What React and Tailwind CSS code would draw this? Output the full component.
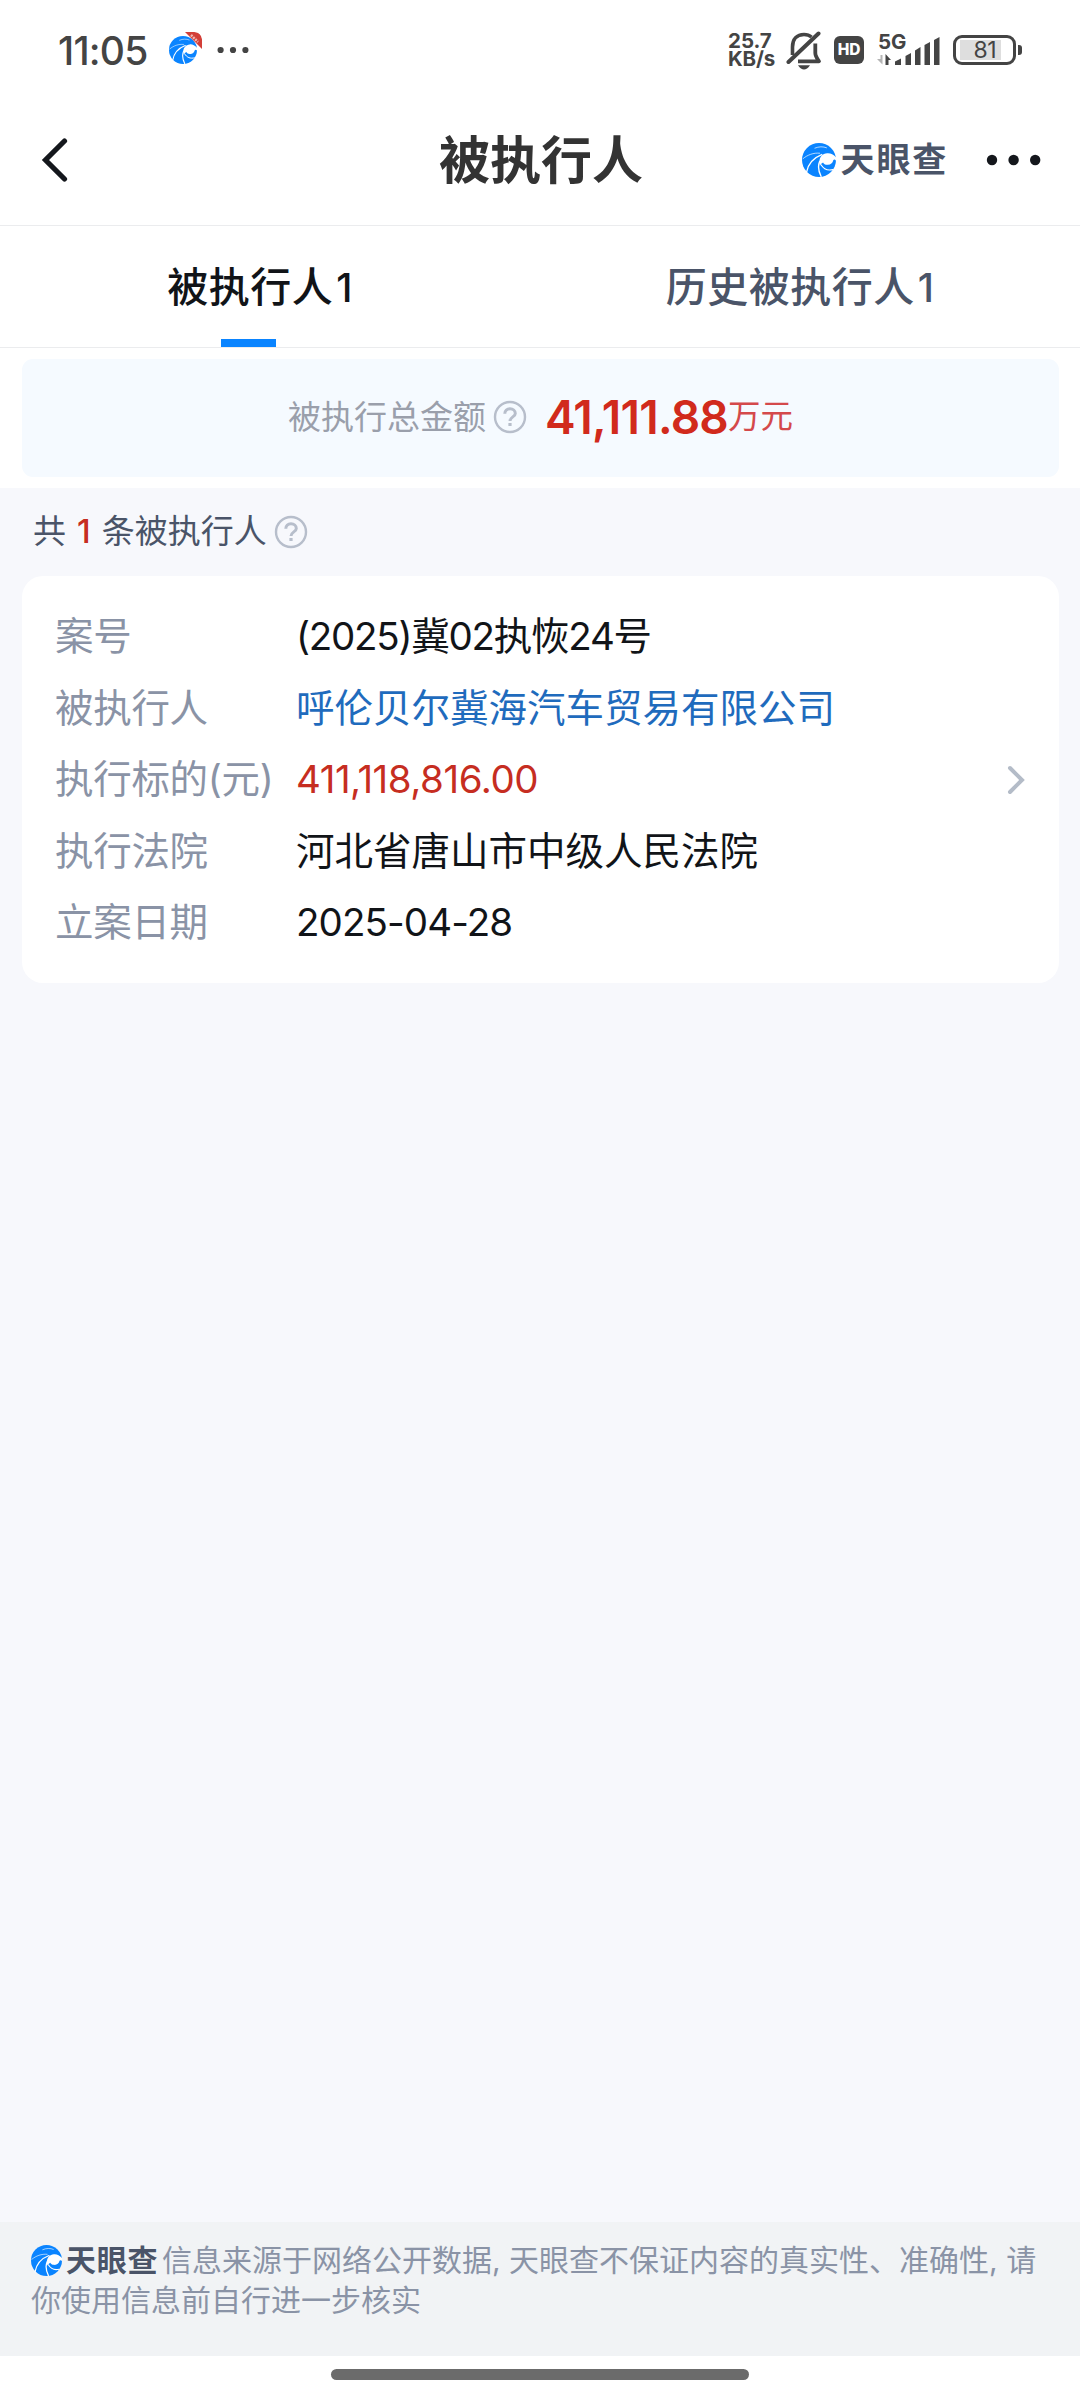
import { Fragment } from "react";

const rows = [
  { label: "案号", value: "(2025)冀02执恢24号", tone: "text-[#111418] tracking-[-1.25px]" },
  { label: "被执行人", value: "呼伦贝尔冀海汽车贸易有限公司", tone: "text-[#1f6bbd]" },
  { label: "执行标的(元)", value: "411,118,816.00", tone: "text-[#c62d21] tracking-[-0.45px]" },
  { label: "执行法院", value: "河北省唐山市中级人民法院", tone: "text-[#111418]" },
  { label: "立案日期", value: "2025-04-28", tone: "text-[#111418] tracking-[-0.9px]" },
];

const tabs = [
  { name: "被执行人", count: 1, active: true },
  { name: "历史被执行人", count: 1, active: false },
];

function Swirl({ className }) {
  return (
    <svg viewBox="0 0 100 100" className={className}>
      <circle cx="50" cy="50" r="50" fill="#0a84ff" />
      <g fill="none" stroke="#fff" strokeLinecap="round">
        <path d="M13 87C17 64 32 44 58 34" strokeWidth="4" />
        <path d="M3 46C16 35 34 28 52 30" strokeWidth="2" />
        <path d="M38 15C50 10 62 10 72 14" strokeWidth="2" />
        <path d="M52 54C46 68 49 84 56 98" strokeWidth="4" />
        <path d="M56 64C64 77 76 82 91 78" strokeWidth="3.5" />
      </g>
      <path
        d="M53 66C47 47 57 31 74 30C84 29 93 34 101 43L100 52C97 48 94 48 92 51C90 60 83 65 74 64C68 64 64 61 62 57C58 59 55 62 53 66Z"
        fill="#fff"
      />
    </svg>
  );
}

function HelpIcon() {
  return (
    <svg viewBox="0 0 34 34" className="h-[34px] w-[34px] shrink-0" fill="none" stroke="#b7becb">
      <circle cx="17" cy="17" r="15" strokeWidth="2.4" />
      <path
        d="M11.8 13.8C11.8 10.6 14 8.8 17 8.8C20 8.8 22.3 10.6 22.3 13.4C22.3 17 17 16.8 17 21"
        strokeWidth="3"
      />
      <rect x="15.4" y="23" width="3.2" height="3" fill="#b7becb" stroke="none" />
    </svg>
  );
}

function StatusBar() {
  return (
    <div className="flex h-[100px] items-center pl-[58px] pr-[58px] text-[#444]">
      <span className="w-[108px] text-[39px] font-medium leading-none tracking-[-0.8px]">11:05</span>
      <div className="relative h-[36px] w-[36px] overflow-hidden rounded-[7px]">
        <Swirl className="ml-[3px] mt-[4px] h-[28px] w-[28px]" />
        <svg viewBox="0 0 17 17" className="absolute right-0 top-0 h-[17px] w-[17px]">
          <path d="M0 0H9C13.5 0 17 3.5 17 8V17Z" fill="#d33f38" />
          <path d="M6 3L13 10" stroke="#f0b5b0" strokeWidth="2.5" strokeDasharray="2 1" />
        </svg>
      </div>
      <svg viewBox="0 0 32 8" className="ml-[15px] h-[8px] w-[32px]" fill="#444">
        <circle cx="3.6" cy="4" r="3.1" />
        <circle cx="16" cy="4" r="3.1" />
        <circle cx="28.4" cy="4" r="3.1" />
      </svg>

      <div className="ml-auto flex items-center">
        <div className="w-[58px] text-[20.5px] font-bold leading-[18.5px]">
          <div>25.7</div>
          <div className="tracking-[-0.2px]">KB/s</div>
        </div>
        {/* Muted bell */}
        <svg viewBox="0 0 36 40" className="h-[40px] w-[36px]" fill="none" stroke="#444">
          <path d="M6.5 25V17C6.5 9 11 4.5 18 4.5C21 4.5 23.5 5.3 25.5 7" strokeWidth="3.6" />
          <path d="M29.3 13.5V23C29.3 26 31 28.5 33 31.3H12" strokeWidth="3.8" strokeLinejoin="round" />
          <path d="M2.5 32L32.5 3.5" strokeWidth="4" strokeLinecap="round" />
          <path d="M12 35.3H24C22 38.5 20 39.5 18 39.5C16 39.5 14 38.5 12 35.3Z" fill="#444" stroke="none" />
        </svg>
        <div className="ml-[12px] flex h-[28px] w-[30px] items-center justify-center rounded-[6px] bg-[#444] text-[15.5px] font-extrabold leading-none tracking-[-0.2px] text-white">
          HD
        </div>
        <div className="relative ml-[13px] h-[34px] w-[63px]">
          <span className="absolute left-[1px] top-0 text-[20.5px] font-bold leading-[18px]">5G</span>
          <svg viewBox="0 0 63 34" className="h-full w-full">
            <path d="M3.5 22V26H0L5.5 31.5V22Z" fill="#b5b5b5" />
            <path d="M8.5 32V21L14 27H11.5V32Z" fill="#444" />
            <g fill="#444">
              <path d="M18 32V28.5L24 25.5V32Z" />
              <path d="M28.5 32V23L34 20V32Z" />
              <path d="M38 32V17.5L43.5 14V32Z" />
              <path d="M47.5 32V12L53 9V32Z" />
              <path d="M57 32V7L62.5 4V32Z" />
            </g>
          </svg>
        </div>
        <div className="ml-[13px] flex h-[30px] w-[63px] items-center rounded-[9px] border-[3px] border-[#444] px-[4px]">
          <div className="flex h-[20px] w-[41px] items-center justify-end bg-[#dedede] pr-[5px] text-[23px] leading-none tracking-[-0.5px]">
            81
          </div>
        </div>
        <div className="ml-[2px] h-[10px] w-[4px] rounded-r-[3px] bg-[#444]" />
      </div>
    </div>
  );
}

function Header() {
  return (
    <header className="grid h-[126px] grid-cols-3 items-center border-b border-[#ebecee] pb-[5px]">
      <svg viewBox="0 0 30 44" className="ml-[40px] h-[44px] w-[30px]" fill="none">
        <path d="M24.5 3L5.5 22L24.5 41" stroke="#14171c" strokeWidth="5.2" strokeLinecap="round" />
      </svg>
      <h1 className="pl-[2px] text-center text-[51px] font-semibold leading-none text-[#333]">被执行人</h1>
      <div className="flex items-center justify-end pr-[38px]">
        <Swirl className="h-[34px] w-[34px]" />
        <span className="ml-[5px] text-[34px] font-bold leading-none tracking-[1.8px] text-[#4a5468]">天眼查</span>
        <svg viewBox="0 0 56 12" className="ml-[38px] h-[12px] w-[56px]" fill="#14171c">
          <circle cx="6" cy="6" r="5.2" />
          <circle cx="27.6" cy="6" r="5.2" />
          <circle cx="49.2" cy="6" r="5.2" />
        </svg>
      </div>
    </header>
  );
}

function Tabs() {
  return (
    <nav className="flex h-[122px] border-b border-[#ebecee] pr-[16px]">
      {tabs.map((tab) => (
        <div
          key={tab.name}
          className={
            tab.active
              ? "relative flex w-[520px] items-center justify-center text-[#111418]"
              : "relative flex flex-1 items-center justify-center pl-[16px] text-[#4a5468]"
          }
        >
          <span className="pt-[1px] text-[41px] font-medium leading-none tracking-[0.5px]">
            {tab.name}
            <span className="ml-[3px] text-[39px]">{tab.count}</span>
          </span>
          {tab.active && <div className="absolute bottom-0 left-[221px] h-[8px] w-[55px] bg-[#0a84ff]" />}
        </div>
      ))}
    </nav>
  );
}

function Summary() {
  return (
    <section className="h-[140px] pl-[22px] pr-[21px] pt-[11px]">
      <div className="flex h-[118px] items-center justify-center rounded-[11px] bg-[#f5faff] pb-[2px]">
        <span className="text-[33px] leading-none text-[#9a9fab]">被执行总金额</span>
        <span className="ml-[7px]">
          <HelpIcon />
        </span>
        <span className="ml-[18px] text-[46px] font-semibold leading-none tracking-[-0.75px] text-[#d12a1c]">41,111.88</span>
        <span className="text-[32.5px] leading-none text-[#d4494b]">万元</span>
      </div>
    </section>
  );
}

function RecordCard() {
  return (
    <article className="flex h-[407px] items-center rounded-[21px] bg-white pl-[33px] pr-[33px]">
      <dl className="grid flex-1 grid-cols-[241px_1fr] pt-[1px] text-[38.5px] leading-[71.6px]">
        {rows.map((row) => (
          <Fragment key={row.label}>
            <dt className="whitespace-nowrap tracking-[-0.3px] text-[#8a93a6]">{row.label}</dt>
            <dd className={row.tone}>{row.value}</dd>
          </Fragment>
        ))}
      </dl>
      <svg viewBox="0 0 20 32" className="h-[32px] w-[20px]" fill="none">
        <path d="M4 4L16 16L4 28" stroke="#b4bcc8" strokeWidth="4" strokeLinecap="round" />
      </svg>
    </article>
  );
}

function Footer() {
  return (
    <footer className="h-[134px] bg-[#f1f3f5] px-[31px] pt-[19px] text-[30px] leading-[39.5px] text-[#8a93a6]">
      <div className="flex items-center">
        <Swirl className="h-[31px] w-[31px]" />
        <span className="ml-[4px] w-[96px] whitespace-nowrap text-[30px] font-bold tracking-[0.8px] text-[#4a5468]">
          天眼查
        </span>
        <span className="whitespace-nowrap">信息来源于网络公开数据, 天眼查不保证内容的真实性、准确性, 请</span>
      </div>
      <div>你使用信息前自行进一步核实</div>
    </footer>
  );
}

export default function App() {
  return (
    <div className="flex h-[2400px] w-[1080px] flex-col overflow-hidden bg-white font-['Inter','Noto_Sans_CJK_SC',sans-serif]">
      <StatusBar />
      <Header />
      <Tabs />
      <Summary />

      <main className="flex-1 bg-[#f7f8fc] pl-[22px] pr-[21px]">
        <div className="flex h-[88px] items-center pb-[2px] pl-[11px] text-[33px] leading-none text-[#4a5468]">
          <span>共</span>
          <span className="mx-[11px] font-medium text-[#c62d21]">1</span>
          <span>条被执行人</span>
          <span className="ml-[7px] pt-[2px]">
            <HelpIcon />
          </span>
        </div>
        <RecordCard />
      </main>

      <Footer />
      <div className="flex h-[44px] justify-center pt-[13px]">
        <div className="h-[11px] w-[418px] rounded-full bg-[#6b6b6b]" />
      </div>
    </div>
  );
}
